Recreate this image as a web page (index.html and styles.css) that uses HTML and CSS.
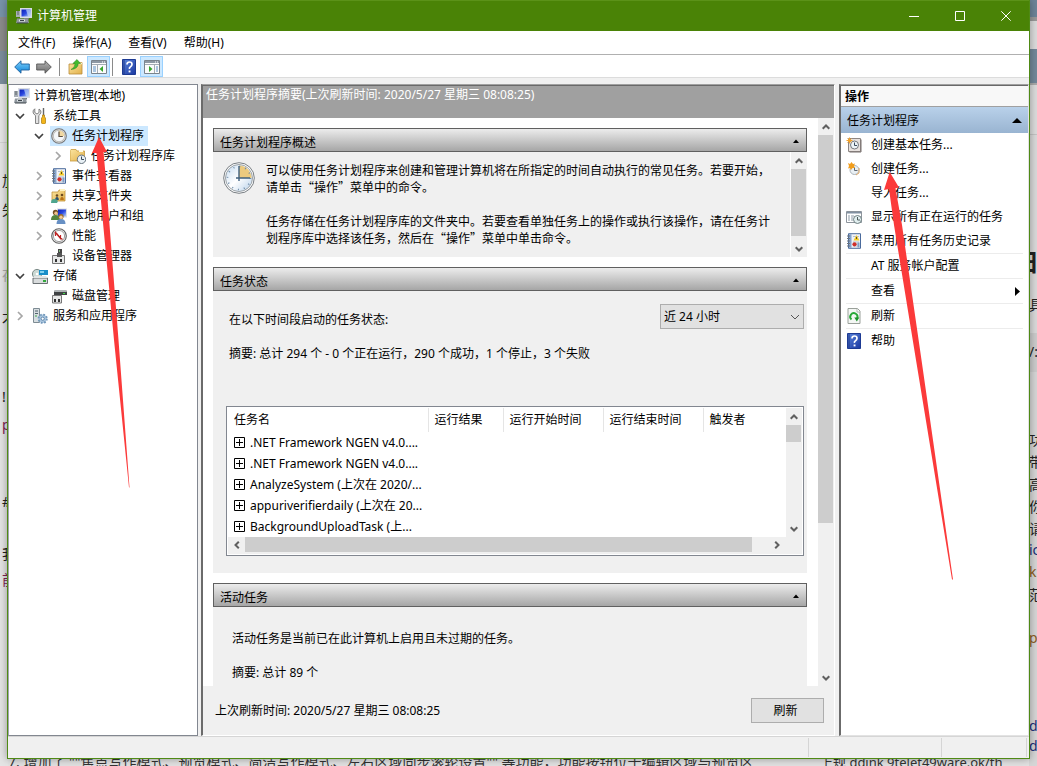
FILE: index.html
```html
<!DOCTYPE html>
<html lang="zh-CN">
<head>
<meta charset="utf-8">
<title>计算机管理</title>
<link rel="stylesheet" href="styles.css">
</head>
<body>
<svg class="defs" aria-hidden="true">
  <defs>
    <linearGradient id="gBlue" x1="0" y1="0" x2="1" y2="1"><stop offset="0" stop-color="#0a1fb4"/><stop offset=".5" stop-color="#2a48e0"/><stop offset="1" stop-color="#b8d4f8"/></linearGradient>
    <linearGradient id="gHelp" x1="0" y1="0" x2="1" y2="1"><stop offset="0" stop-color="#5b86dc"/><stop offset="1" stop-color="#1a37a0"/></linearGradient>
    <linearGradient id="gArrow" x1="0" y1="0" x2="0" y2="1"><stop offset="0" stop-color="#7fd0fb"/><stop offset="1" stop-color="#0d83d8"/></linearGradient>
    <linearGradient id="gGrey" x1="0" y1="0" x2="0" y2="1"><stop offset="0" stop-color="#b4b4b4"/><stop offset="1" stop-color="#6c6c6c"/></linearGradient>
    <linearGradient id="gFace" x1="0" y1="0" x2="1" y2="1"><stop offset="0" stop-color="#c3daf0"/><stop offset=".5" stop-color="#fff"/><stop offset="1" stop-color="#b5d0ea"/></linearGradient>
    <linearGradient id="gFold" x1="0" y1="0" x2="1" y2="1"><stop offset="0" stop-color="#fbe5a0"/><stop offset="1" stop-color="#e2b04a"/></linearGradient>
    <symbol id="i-computer" viewBox="0 0 16 16">
      <path d="M4 0h12v10H4z" fill="#d9dde2"/><path d="M5.500 1.500h9v7h-9z" fill="url(#gBlue)"/><path d="M10 1.500h4.500v7H12z" fill="#b9d2f6" opacity=".75"/>
      <path d="M0 3h4v6H0z" fill="#a9b0b6"/><path d="M1 4h2M1 6h2" stroke="#596066"/>
      <path d="M8 10h5v1.500H8z" fill="#70777d"/><path d="M1 10.500h11l1 4.500H0z" fill="#8f979e"/><path d="M3 11.500h6v2H3z" fill="#dfe5e8"/><path d="M4 12.500h4M1 15h11" stroke="#3e464c"/>
    </symbol>
    <symbol id="i-tools" viewBox="0 0 16 16">
      <path d="M2.800.8v3.700L5 6l2-1.500V1q2 1 2 3T6.800 7.500v8H3.500v-8Q1 6 1 4T2.800.8z" fill="#e3e3e3" stroke="#777" stroke-width=".9"/>
      <path d="M11.500 0v7" stroke="#666" stroke-width="1.400"/><path d="M10.500 7h2v2l1 1v5l-1 1h-2l-1-1v-5l1-1z" fill="#f3b51b" stroke="#a7780c" stroke-width=".7"/>
    </symbol>
    <symbol id="i-clock" viewBox="0 0 16 16">
      <circle cx="8" cy="8" r="7.300" fill="#e2e2e0" stroke="#77787a" stroke-width="1.100"/><circle cx="8" cy="8" r="5.700" fill="#f4f7fa" stroke="#a8a8a4" stroke-width=".7"/>
      <path d="M8 8V2.500A5.500 5.500 0 0 1 13.500 8z" fill="#f0d8a2"/><path d="M8 3.500V8.500h3.800" fill="none" stroke="#5a4d3e" stroke-width="1.200"/>
    </symbol>
    <symbol id="i-bigclock" viewBox="0 0 32 32">
      <circle cx="16" cy="16" r="15.300" fill="#fff" stroke="#777d82"/><circle cx="16" cy="16" r="13.500" fill="url(#gFace)" stroke="#9aa1a6"/>
      <path d="M16 16V3.500A12.500 12.500 0 0 1 28.500 16z" fill="#ecca7e"/>
      <circle cx="16" cy="16" r="11.500" fill="none" stroke="#6d8aa6" stroke-width="1.600" stroke-dasharray="1 5.020"/>
      <path d="M16 4v15M13 16h14" stroke="#3f607e" stroke-width="1.400"/>
    </symbol>
    <symbol id="i-folderclock" viewBox="0 0 16 16">
      <path d="M0 2.500l1-1h5l1 1.500h7.500V13H0z" fill="url(#gFold)" stroke="#c79a3c" stroke-width=".8"/><path d="M9 2h4v2H9z" fill="#fffbe8"/>
      <circle cx="11.500" cy="11.300" r="4.200" fill="#e9f0f5" stroke="#66737d"/><path d="M11.500 8.500v3H14" fill="none" stroke="#384c5c"/>
    </symbol>
    <symbol id="i-book" viewBox="0 0 16 16">
      <path d="M2.500.7h12v14.600h-12z" fill="#f0f2f6" stroke="#4a6a9c"/><path d="M3 1.200h2.500v13.600H3z" fill="#86a4cc"/>
      <path d="M1 3h3M1 5.500h3M1 8h3M1 10.500h3M1 13h3" stroke="#6d757d"/><path d="M7 9h6M7 11h6M7 13h6M7 3.500h6" stroke="#b3bfce"/>
      <path d="M10.500 2L13.500 7.500H7.500z" fill="#f6cb27"/><path d="M10.500 4v2" stroke="#665214"/><circle cx="8.500" cy="11.300" r="2.100" fill="#cf2d2a"/><path d="M11.500 9.500h2v5h-2z" fill="#7f9cc6"/>
    </symbol>
    <symbol id="i-share" viewBox="0 0 16 16">
      <path d="M1 4h6l1-2h6v11H1z" fill="url(#gFold)" stroke="#c29338" stroke-width=".8"/><path d="M9 1h5v2H9z" fill="#fff2c0"/>
      <circle cx="6" cy="7.500" r="1.300" fill="#6b4a20"/><path d="M4.200 12q0-3 1.800-3t1.800 3z" fill="#31516c"/><circle cx="11" cy="7" r="1.300" fill="#6b4a20"/><path d="M9.200 12q0-3 1.800-3t1.800 3z" fill="#b77218"/>
      <path d="M0 15q0-4 3-4t4 2l-1 2z" fill="#4ea58e"/>
    </symbol>
    <symbol id="i-users" viewBox="0 0 16 16">
      <path d="M6 .5h10v9H6z" fill="#d9dde2"/><path d="M7 1.500h8v7H7z" fill="url(#gBlue)"/>
      <circle cx="4.500" cy="4.500" r="2.700" fill="#765126"/><circle cx="5" cy="5.300" r="1.700" fill="#eec28e"/><path d="M0 12q0-5 4.500-5T9 12z" fill="#54843e"/>
      <circle cx="10" cy="8.500" r="2.600" fill="#9a6c28"/><circle cx="10" cy="9.300" r="1.700" fill="#f0c89a"/><path d="M5.500 16q0-5 4.500-5t4.500 5z" fill="#6790c4"/>
    </symbol>
    <symbol id="i-perf" viewBox="0 0 16 16">
      <circle cx="8" cy="8" r="7.300" fill="#f2f2f2" stroke="#606060" stroke-width="1.100"/><circle cx="8" cy="8" r="5.600" fill="#fff" stroke="#888" stroke-width=".8"/>
      <path d="M4.500 8V4.500l5 6V7M9 10.500l2.500.5" fill="none" stroke="#c32424" stroke-width="1.200"/><path d="M5 4.500l6 7" stroke="#b01818"/>
    </symbol>
    <symbol id="i-device" viewBox="0 0 16 16">
      <path d="M7 1h4v8H7z" fill="#454545"/><path d="M8.500 2v2" stroke="#7fb37a"/><path d="M1.500 7.500h12v8h-12z" fill="#e7e8e8" stroke="#777"/><path d="M6 5h5v4H6z" fill="#555"/><path d="M4 11h2v3H4zM9 11h2v3H9z" fill="#333"/>
    </symbol>
    <symbol id="i-storage" viewBox="0 0 16 16">
      <circle cx="5" cy="6" r="4.600" fill="#cbd9d4" stroke="#7c8b88"/><circle cx="5" cy="6" r="1.300" fill="#fff"/>
      <path d="M7 2h9v5H7z" fill="#1a8ec8"/><path d="M8 3h4v2H8z" fill="#84d1ef"/><path d="M1 10h14.500v5.500H1z" fill="#d9dcdd" stroke="#5c6265" stroke-width=".9"/><path d="M2 8h12l1.500 2H1z" fill="#e2e5e5"/><path d="M11 12h3v2h-3z" fill="#32a83b"/>
    </symbol>
    <symbol id="i-disk" viewBox="0 0 16 16">
      <path d="M4 2h11l1 2v3H3V4z" fill="#3f4244"/><path d="M4 2h11l1 2H3z" fill="#aeb3b5"/><path d="M12 5.500h2" stroke="#46df4b"/><path d="M1.500 7.500h9v7.500h-9z" fill="#e7e8e8" stroke="#777"/><path d="M3 11h2v3H3zM7 11h2v3H7z" fill="#333"/>
    </symbol>
    <symbol id="i-service" viewBox="0 0 16 16">
      <path d="M1.500.5h6v14h-6z" fill="#d6dde0" stroke="#7d8b93"/><path d="M3 3h3M3 5.500h3" stroke="#53646e"/><path d="M3 8h2" stroke="#3ba646"/>
      <circle cx="10.700" cy="10.700" r="4.200" fill="#a9c5de" stroke="#7197ba" stroke-width="1.800" stroke-dasharray="1.800 1.500"/><circle cx="10.700" cy="10.700" r="1.600" fill="#fff" stroke="#5f86ab"/>
    </symbol>
    <symbol id="i-help" viewBox="0 0 14 16">
      <path d="M.5.5h13v15H.5z" fill="url(#gHelp)" stroke="#1d3a93"/><path d="M2 1v14" stroke="#1c3484"/>
      <path d="M5 5.500Q5 3 7.500 3T10 5.300Q10 6.800 8.500 7.700T7.500 10" fill="none" stroke="#fff" stroke-width="1.700"/><path d="M6.600 11.500h1.900v1.900H6.600z" fill="#fff"/>
    </symbol>
    <symbol id="i-back" viewBox="0 0 16 14">
      <path d="M.7 7L7 .8V4h8.300v6H7v3.200z" fill="url(#gArrow)" stroke="#1b5f9c" stroke-width=".9"/>
    </symbol>
    <symbol id="i-fwd" viewBox="0 0 16 14">
      <path d="M15.300 7L9 .8V4H.7v6H9v3.200z" fill="url(#gGrey)" stroke="#555" stroke-width=".9"/>
    </symbol>
    <symbol id="i-up" viewBox="0 0 16 16">
      <path d="M1 5h5l1-1.500h7V15H1z" fill="url(#gFold)" stroke="#b98c38" stroke-width=".8"/><path d="M9 4.500h5" stroke="#fff3c6" stroke-width="1.500"/>
      <path d="M3 10.500Q7 9 7 4.500H4.800L9 .5l3.500 4h-2.200Q10 10 3 10.500z" fill="#43bb2c" stroke="#23831a" stroke-width=".5"/>
    </symbol>
    <symbol id="i-paneleft" viewBox="0 0 16 14">
      <path d="M.5.5h15v13H.5z" fill="#fbfbfb" stroke="#7a838c"/><path d="M1 1h14v2H1z" fill="#8d98a4"/><path d="M11 2h1M13 2h1" stroke="#fff"/><path d="M1 4.500h14M6.500 5v8" stroke="#a4acb5"/><path d="M2 7h3M2 9h3M2 11h3" stroke="#5a8fc4"/><path d="M12 6v6L8.500 9z" fill="#36a52b"/>
    </symbol>
    <symbol id="i-paneright" viewBox="0 0 16 14">
      <path d="M.5.5h15v13H.5z" fill="#fbfbfb" stroke="#7a838c"/><path d="M1 1h14v2H1z" fill="#8d98a4"/><path d="M11 2h1M13 2h1" stroke="#fff"/><path d="M1 4.500h14M10.500 5v8" stroke="#a4acb5"/><path d="M12 7h2M12 9h2M12 11h2" stroke="#5a8fc4"/><path d="M5 6v6l3.500-3z" fill="#36a52b"/>
    </symbol>
    <symbol id="i-basic" viewBox="0 0 16 16">
      <path d="M2.500 1.500h12v13h-12z" fill="#e8e2df" stroke="#8d8683"/><path d="M15 2.500v12.500H3.500" fill="none" stroke="#78716e"/><circle cx="8.500" cy="8" r="4" fill="#edf4f8" stroke="#76797e"/><path d="M8.500 5.500V8.500H11" fill="none" stroke="#3e4d5d"/>
      <path d="M3.500.5v6M.5 3.500h6M1.500 1.500l4 4M5.500 1.500l-4 4" stroke="#f2a22a"/>
    </symbol>
    <symbol id="i-task" viewBox="0 0 16 16">
      <circle cx="8.500" cy="9" r="4.500" fill="#e9eff3" stroke="#a9b2b9"/><path d="M8.500 6.500v3H11.500" fill="none" stroke="#5f6871"/><path d="M13 7v5l-3 2" fill="none" stroke="#e0a968"/>
      <path d="M3 3h5v4H3z" fill="#f6b03a"/><path d="M2 2l2 1 1.500-2L7 3l2-.5L8 5l1 2-2.500 0L5 9 4 7 2 7.500 3 5z" fill="#f19d1c"/>
    </symbol>
    <symbol id="i-running" viewBox="0 0 16 16">
      <path d="M.5 2.500h15v11H.5z" fill="#fff" stroke="#8d949c"/><path d="M1 3h14v1.500H1z" fill="#8190a1"/><path d="M2 7h2M5 7h3M2 9h2M5 9h2M2 11h2M5 11h2" stroke="#8c99a5"/>
      <circle cx="11.500" cy="10.500" r="4" fill="#e2eff0" stroke="#6e7e80"/><path d="M11.500 8v3H14" fill="none" stroke="#4f5d5c"/>
    </symbol>
    <symbol id="i-refresh" viewBox="0 0 16 16">
      <path d="M2 .5h9.500L14 3v12.500H2z" fill="#f4f7f4" stroke="#9aa09a"/><path d="M11 1v3h3" fill="#fff" stroke="#9aa09a" stroke-width=".7"/>
      <path d="M5.500 11.500A3.600 3.600 0 1 1 11 10.500" fill="none" stroke="#28a838" stroke-width="1.900"/><path d="M8.300 9.500h5l-2.500 4z" fill="#1b9229"/>
    </symbol>
    <symbol id="c-up" viewBox="0 0 8 6"><path d="M.7 4.800L4 1.500l3.300 3.300" fill="none" stroke="currentColor" stroke-width="2"/></symbol>
    <symbol id="c-down" viewBox="0 0 8 6"><path d="M.7 1.200L4 4.500l3.300-3.300" fill="none" stroke="currentColor" stroke-width="2"/></symbol>
    <symbol id="c-left" viewBox="0 0 6 8"><path d="M4.800.7L1.500 4l3.300 3.300" fill="none" stroke="currentColor" stroke-width="2"/></symbol>
    <symbol id="c-right" viewBox="0 0 6 8"><path d="M1.200.7L4.500 4 1.200 7.300" fill="none" stroke="currentColor" stroke-width="2"/></symbol>
    <symbol id="t-open" viewBox="0 0 10 10"><path d="M1 3l4 4 4-4" fill="none" stroke="#404040" stroke-width="1.700"/></symbol>
    <symbol id="t-closed" viewBox="0 0 10 10"><path d="M3 1l4 4-4 4" fill="none" stroke="#a6a6a6" stroke-width="1.700"/></symbol>
    <symbol id="t-tri" viewBox="0 0 6 4"><path d="M0 4l3-3.500L6 4z"/></symbol>
  </defs>
</svg>

<div class="desktop" aria-hidden="true">
  <div class="edge edge-left">
    <i style="top:172px">加</i><i style="top:201px">失</i><i style="top:266px" class="faint">存</i><i style="top:309px">才</i><i style="top:388px">!</i><i style="top:416px" class="plum">p</i><i style="top:493px">#</i><i style="top:545px">我</i><i style="top:571px" class="plum">前</i>
  </div>
  <div class="edge edge-right">
    <i style="top:250px" class="large">日</i><i style="top:296px">具</i><i style="top:343px">/:</i><i style="top:431px">功</i><i style="top:453px">带</i><i style="top:476px">高</i><i style="top:498px">你</i><i style="top:520px">请</i><i style="top:541px" class="navy">ic</i><i style="top:563px" class="brown">k</i><i style="top:586px">范</i><i style="top:629px" class="brown">p</i><i style="top:717px" class="navy">d&gt;</i><i style="top:737px" class="navy">d&gt;</i>
  </div>
  <p class="under under-left">7. 增加了 ""焦点写作模式、预览模式、简洁写作模式、左右区域同步滚轮设置"" 等功能，功能按钮位于编辑区域与预览区</p>
  <p class="under under-right">上规 ddink 9telet49ware.ok/th</p>
</div>

<main class="window">
  <header class="titlebar">
    <svg class="ic"><use href="#i-computer"/></svg>
    <h1>计算机管理</h1>
    <button class="winbtn" aria-label="最小化"><svg viewBox="0 0 10 10"><path d="M0 5.500h10"/></svg></button>
    <button class="winbtn" aria-label="最大化"><svg viewBox="0 0 10 10"><path d="M.5.5h9v9h-9z"/></svg></button>
    <button class="winbtn" aria-label="关闭"><svg viewBox="0 0 10 10"><path d="M.3.3l9.400 9.400M9.700.3L.3 9.700"/></svg></button>
  </header>
  <nav class="menubar">
    <button>文件(F)</button><button>操作(A)</button><button>查看(V)</button><button>帮助(H)</button>
  </nav>
  <div class="toolbar">
    <button aria-label="后退" class="back"><svg class="ic"><use href="#i-back"/></svg></button>
    <button aria-label="前进" class="fwd"><svg class="ic"><use href="#i-fwd"/></svg></button>
    <span class="sep"></span>
    <button aria-label="上一级"><svg class="ic"><use href="#i-up"/></svg></button>
    <button aria-label="显示控制台树" class="on"><svg class="ic"><use href="#i-paneleft"/></svg></button>
    <span class="sep"></span>
    <button aria-label="帮助"><svg class="ic"><use href="#i-help"/></svg></button>
    <button aria-label="显示操作窗格" class="on"><svg class="ic"><use href="#i-paneright"/></svg></button>
  </div>

  <div class="panes">
    <nav class="tree">
      <ul>
        <li><button class="node root"><svg class="ic"><use href="#i-computer"/></svg><span>计算机管理(本地)</span></button>
          <ul>
            <li><button class="node"><svg class="tw"><use href="#t-open"/></svg><span class="pick"><svg class="ic"><use href="#i-tools"/></svg><span>系统工具</span></span></button>
              <ul>
                <li><button class="node"><svg class="tw"><use href="#t-open"/></svg><span class="pick selected"><svg class="ic"><use href="#i-clock"/></svg><span>任务计划程序</span></span></button>
                  <ul><li><button class="node"><svg class="tw"><use href="#t-closed"/></svg><span class="pick"><svg class="ic"><use href="#i-folderclock"/></svg><span>任务计划程序库</span></span></button></li></ul>
                </li>
                <li><button class="node"><svg class="tw"><use href="#t-closed"/></svg><span class="pick"><svg class="ic"><use href="#i-book"/></svg><span>事件查看器</span></span></button></li>
                <li><button class="node"><svg class="tw"><use href="#t-closed"/></svg><span class="pick"><svg class="ic"><use href="#i-share"/></svg><span>共享文件夹</span></span></button></li>
                <li><button class="node"><svg class="tw"><use href="#t-closed"/></svg><span class="pick"><svg class="ic"><use href="#i-users"/></svg><span>本地用户和组</span></span></button></li>
                <li><button class="node"><svg class="tw"><use href="#t-closed"/></svg><span class="pick"><svg class="ic"><use href="#i-perf"/></svg><span>性能</span></span></button></li>
                <li><button class="node"><svg class="tw"></svg><span class="pick"><svg class="ic"><use href="#i-device"/></svg><span>设备管理器</span></span></button></li>
              </ul>
            </li>
            <li><button class="node"><svg class="tw"><use href="#t-open"/></svg><span class="pick"><svg class="ic"><use href="#i-storage"/></svg><span>存储</span></span></button>
              <ul><li><button class="node"><svg class="tw"></svg><span class="pick"><svg class="ic"><use href="#i-disk"/></svg><span>磁盘管理</span></span></button></li></ul>
            </li>
            <li><button class="node"><svg class="tw"><use href="#t-closed"/></svg><span class="pick"><svg class="ic"><use href="#i-service"/></svg><span>服务和应用程序</span></span></button></li>
          </ul>
        </li>
      </ul>
    </nav>

    <section class="summary">
      <h2>任务计划程序摘要(上次刷新时间: 2020/5/27 星期三 08:08:25)</h2>
      <div class="scroller">
        <div class="cards">
          <article class="card">
            <button class="cardhead"><span>任务计划程序概述</span><svg class="tri"><use href="#t-tri"/></svg></button>
            <div class="overview">
              <svg class="bigic"><use href="#i-bigclock"/></svg>
              <div class="copy">
                <p>可以使用任务计划程序来创建和管理计算机将在所指定的时间自动执行的常见任务。若要开始，<br>请单击“操作”菜单中的命令。</p>
                <p>任务存储在任务计划程序库的文件夹中。若要查看单独任务上的操作或执行该操作，请在任务计<br>划程序库中选择该任务，然后在“操作”菜单中单击命令。</p>
              </div>
              <div class="vbar framed"><svg class="cap"><use href="#c-up"/></svg><span class="thumb" style="flex-grow:67"></span><span style="flex-grow:4"></span><svg class="cap"><use href="#c-down"/></svg></div>
            </div>
          </article>

          <article class="card">
            <button class="cardhead"><span>任务状态</span><svg class="tri"><use href="#t-tri"/></svg></button>
            <div class="status">
              <div class="period">
                <label for="period">在以下时间段启动的任务状态:</label>
                <div class="combo"><select id="period"><option>近 24 小时</option></select><svg viewBox="0 0 8 6"><path d="M0 1l4 4 4-4"/></svg></div>
              </div>
              <p>摘要: 总计 294 个 - 0 个正在运行，290 个成功，1 个停止，3 个失败</p>
              <div class="grid">
                <div class="gridmain">
                  <table>
                    <colgroup><col class="c1"><col class="c2"><col class="c3"><col class="c3"><col></colgroup>
                    <thead><tr><th>任务名</th><th>运行结果</th><th>运行开始时间</th><th>运行结束时间</th><th>触发者</th></tr></thead>
                    <tbody>
                      <tr><td colspan="5"><svg class="plus" viewBox="0 0 11 11"><path d="M.5.5h10v10H.5zM2 5.500h7M5.500 2v7"/></svg>.NET Framework NGEN v4.0....</td></tr>
                      <tr><td colspan="5"><svg class="plus" viewBox="0 0 11 11"><path d="M.5.5h10v10H.5zM2 5.500h7M5.500 2v7"/></svg>.NET Framework NGEN v4.0....</td></tr>
                      <tr><td colspan="5"><svg class="plus" viewBox="0 0 11 11"><path d="M.5.5h10v10H.5zM2 5.500h7M5.500 2v7"/></svg>AnalyzeSystem (上次在 2020/...</td></tr>
                      <tr><td colspan="5"><svg class="plus" viewBox="0 0 11 11"><path d="M.5.5h10v10H.5zM2 5.500h7M5.500 2v7"/></svg>appuriverifierdaily (上次在 20...</td></tr>
                      <tr><td colspan="5"><svg class="plus" viewBox="0 0 11 11"><path d="M.5.5h10v10H.5zM2 5.500h7M5.500 2v7"/></svg>BackgroundUploadTask (上...</td></tr>
                    </tbody>
                  </table>
                  <div class="vbar"><svg class="cap"><use href="#c-up"/></svg><span class="thumb" style="flex-grow:17"></span><span style="flex-grow:79"></span><svg class="cap"><use href="#c-down"/></svg></div>
                </div>
                <div class="hbar"><svg class="cap"><use href="#c-left"/></svg><span class="thumb" style="flex-grow:507"></span><span style="flex-grow:16"></span><svg class="cap"><use href="#c-right"/></svg></div>
              </div>
            </div>
          </article>

          <article class="card last">
            <button class="cardhead"><span>活动任务</span><svg class="tri"><use href="#t-tri"/></svg></button>
            <div class="active">
              <p>活动任务是当前已在此计算机上启用且未过期的任务。</p>
              <p>摘要: 总计 89 个</p>
            </div>
          </article>
        </div>
        <div class="vbar"><svg class="cap"><use href="#c-up"/></svg><span class="thumb" style="flex-grow:388"></span><span style="flex-grow:146"></span><svg class="cap"><use href="#c-down"/></svg></div>
      </div>
      <footer class="refreshed"><span>上次刷新时间: 2020/5/27 星期三 08:08:25</span><button>刷新</button></footer>
    </section>

    <aside class="actions">
      <h2>操作</h2>
      <button class="group"><span>任务计划程序</span><svg viewBox="0 0 10 5"><path d="M0 5l5-5 5 5z"/></svg></button>
      <div class="items">
        <button><svg class="ic"><use href="#i-basic"/></svg><span>创建基本任务...</span></button>
        <button><svg class="ic"><use href="#i-task"/></svg><span>创建任务...</span></button>
        <button><svg class="ic"></svg><span>导入任务...</span></button>
        <button><svg class="ic"><use href="#i-running"/></svg><span>显示所有正在运行的任务</span></button>
        <button><svg class="ic"><use href="#i-book"/></svg><span>禁用所有任务历史记录</span></button>
        <button class="ruled"><svg class="ic"></svg><span>AT 服务帐户配置</span></button>
        <button class="ruled"><svg class="ic"></svg><span>查看</span><svg class="more" viewBox="0 0 5 9"><path d="M0 0l5 4.500L0 9z"/></svg></button>
        <button class="ruled"><svg class="ic"><use href="#i-refresh"/></svg><span>刷新</span></button>
        <button class="ruled"><svg class="ic"><use href="#i-help"/></svg><span>帮助</span></button>
      </div>
    </aside>
  </div>

  <footer class="statusbar"><span class="s1"></span><span class="s2"></span><span class="s3"></span></footer>
</main>

<svg class="marks" width="1037" height="766" viewBox="0 0 1037 766" aria-hidden="true">
  <path d="M99 137l8 15h-3.500l2.500 28 12.500 160 11 147.500h-.5L114 340 99 180l-2.500-27H92z"/>
  <path d="M889.700 172l9.300 15.500-3.500.8 6.500 36.700 19.500 135 31.500 219.500h-1L916 360l-22-135-5-36-5 1z"/>
</svg>
</body>
</html>
```
FILE: styles.css
```css
* { box-sizing: border-box; }
html, body { height: 100%; }
body {
  margin: 0;
  padding: 0 7px 7px;
  overflow: hidden;
  background: #e2e2e2;
  color: #000;
  font: 12px/16px "Noto Sans", "Noto Sans CJK SC", sans-serif;
}
h1, h2, p, ul { margin: 0; padding: 0; font-size: 12px; font-weight: 400; }
ul { list-style: none; }
button {
  margin: 0;
  padding: 0;
  border: 0;
  background: none;
  color: inherit;
  font: inherit;
  text-align: left;
}
.defs { position: absolute; width: 0; height: 0; }
.ic { width: 16px; height: 16px; flex: none; }

/* desktop behind the window */
.desktop { position: absolute; inset: 0; overflow: hidden; z-index: -1; }
.edge { position: absolute; top: 0; bottom: 0; width: 8px; overflow: hidden; }
.edge i { position: absolute; left: 0; font-style: normal; font-size: 14px; line-height: 18px; color: #222; white-space: nowrap; }
.edge-left { left: 0; background: linear-gradient(#7893a8 0 17px, #8b8b8b 17px 51px, #7b8d9c 51px 84px, #e6e6e6 84px 142px, #d2d2d2 142px 143px, #e4e4e4 143px); }
.edge-left i { left: 2px; }
.edge-right { right: 0; background: linear-gradient(#6d8498 0 17px, #999 17px 21px, #dcdcdc 21px 49px, #73889a 49px 83px, #aaa 83px 85px, #dcdcdc 85px 134px, #c4c4c4 134px 135px, #dadada 135px 333px, #ccc 333px 372px, #d6d6d6 372px); }
.edge .large { font-size: 24px; line-height: 24px; font-weight: 700; left: -14px; }
.edge .faint { color: #aaa; }
.edge .plum { color: #7c2150; }
.edge .navy { color: #1b2e78; }
.edge .brown { color: #8c5a22; }
.under { position: absolute; bottom: -5px; font-size: 14px; line-height: 18px; white-space: nowrap; color: #333; }
.under-left { left: 8px; }
.under-right { left: 820px; width: 209px; overflow: hidden; font-size: 13px; }

/* window frame */
.window {
  display: flex;
  flex-direction: column;
  height: 100%;
  border: 1px solid #4f8a15;
  border-top: 0;
  background: #f0f0f0;
  box-shadow: 0 0 8px rgba(0, 0, 0, .35);
}
.titlebar { display: flex; align-items: center; height: 31px; padding-left: 8px; background: #4a8306; color: #fff; border-top: 1px solid #5b9218; flex: none; }
.titlebar h1 { flex: 1; padding-left: 5px; }
.winbtn { display: grid; place-items: center; width: 46px; height: 30px; }
.winbtn svg { width: 10px; height: 10px; fill: none; stroke: #fff; }
.menubar { display: flex; flex: none; height: 24px; padding: 1px 0 0 10px; gap: 17px; align-items: center; background: #fff; border-bottom: 1px solid #b0b0b0; }
.toolbar { display: flex; flex: none; align-items: center; height: 23px; padding: 1px 0 0 5px; background: #fff; border-bottom: 1px solid #dcdcdc; }
.toolbar button { display: grid; place-items: center; width: 23px; height: 21px; }
.toolbar .on { background: #cce8ff; border: 1px solid #99d1ff; }
.toolbar .back { width: 17px; }
.toolbar .fwd { width: 27px; }
.toolbar .sep { width: 1px; height: 18px; margin: 0 4px 0 2px; background: #8a8a8a; }

/* three panes */
.panes { display: flex; flex: 1; min-height: 0; padding-top: 6px; }
.tree { flex: none; width: 190px; padding: 1px 0 0 5px; background: #fff; border: 1px solid #828790; border-left-color: #a0a5ac; }
.node { display: flex; align-items: center; height: 20px; white-space: nowrap; }
.root { gap: 4px; }
.tree ul ul ul { padding-left: 19px; }
.tw { width: 10px; height: 10px; margin: 0 6px 0 1px; flex: none; }
.pick { display: flex; align-items: center; gap: 5px; height: 20px; padding: 0 4px 0 1px; }
.selected { background: #cce8ff; }

.summary { display: flex; flex-direction: column; flex: 1; min-width: 0; margin: 0 4px 0 3px; border: 1px solid #a0a0a0; border-left: 2px solid #6b6b6b; border-right-color: #fff; border-bottom-color: #fff; }
.summary h2 { height: 33px; flex: none; padding: 1px 3px; background: #a0a0a0; border-top: 1px solid #696969; color: #fff; white-space: nowrap; }
.scroller { display: flex; flex: 1; min-height: 0; background: #fff; overflow: hidden; }
.cards { display: flex; flex-direction: column; flex: 1; min-width: 0; gap: 10px; padding: 10px 11px 0 10px; }
.card { flex: none; background: #f0f0f0; }
.last { flex: 1; }
.cardhead { display: flex; align-items: center; justify-content: space-between; width: 100%; height: 24px; padding: 5px 7px 0 6px; border: 1px solid #606060; background: linear-gradient(#ececec, #a6a6a6); }
.tri { width: 6px; height: 4px; margin-bottom: 4px; }
.overview { display: flex; height: 105px; padding-left: 10px; }
.bigic { width: 32px; height: 32px; margin: 10px 11px 0 0; flex: none; }
.copy { flex: 1; min-width: 0; padding-top: 9px; line-height: 17px; font-family: "Noto Sans CJK SC", sans-serif; white-space: nowrap; }
.copy p + p { margin-top: 17px; }

.vbar { display: flex; flex: none; flex-direction: column; width: 16px; padding-right: 1px; background: #f0f0f0; color: #606060; }
.vbar.framed { width: 17px; border-left: 1px solid #fff; }
.thumb { background: #cdcdcd; }
.vbar .cap { width: 8px; height: 17px; margin: 0 auto; padding: 6px 0 5px; flex: none; }
.hbar { display: flex; flex: none; height: 17px; padding: 0 17px 2px 0; background: #f0f0f0; color: #606060; }
.hbar .cap { width: 17px; height: 8px; margin: auto 0; padding: 0 5px 0 6px; flex: none; }

.status { padding: 13px 3px 17px 13px; height: 282px; display: flex; flex-direction: column; }
.period { display: flex; justify-content: space-between; margin-left: 3px; }
.period label { padding-top: 8px; }
.status > p { margin: 17px 0 44px 3px; }
.combo { position: relative; width: 144px; }
.combo select { appearance: none; width: 100%; height: 25px; padding: 0 3px; border: 1px solid #adadad; border-radius: 0; background: #e1e1e1; font: inherit; color: inherit; }
.combo svg { position: absolute; right: 5px; top: 10px; width: 8px; height: 6px; fill: none; stroke: #555; pointer-events: none; }
.grid { display: flex; flex-direction: column; flex: 1; min-height: 0; padding: 1px; border: 1px solid #828790; background: #fff; }
.gridmain { display: flex; flex: 1; min-height: 0; }
table { flex: 1; height: 129px; border-collapse: collapse; table-layout: fixed; width: 100%; }
.c1 { width: 200px; }
.c2 { width: 75px; }
.c3 { width: 100px; }
th { height: 24px; padding: 0 6px; font-weight: 400; text-align: left; border-right: 1px solid #e5e5e5; white-space: nowrap; }
th:last-child { border-right: 0; }
td { height: 21px; padding: 0 6px; white-space: nowrap; }
.plus { width: 11px; height: 11px; margin-right: 5px; fill: none; stroke: #000; vertical-align: -1px; }
.active { padding: 24px 19px 0; }
.active p + p { margin-top: 18px; }
.refreshed { display: flex; align-items: center; justify-content: space-between; flex: none; height: 49px; padding: 0 10px 0 12px; }
.refreshed button { width: 73px; height: 25px; border: 1px solid #adadad; background: #e1e1e1; text-align: center; padding-right: 4px; }

.actions { flex: none; width: 190px; background: #fff; border: 1px solid #a0a0a0; border-left: 2px solid #6b6b6b; border-right-color: #e3e3e3; border-bottom-color: #e3e3e3; }
.actions h2 { height: 22px; padding: 3px 5px 0 4px; font-weight: 700; background: #f8f8f8; border-top: 1px solid #696969; border-bottom: 1px solid #a0a0a0; }
.group { display: flex; align-items: center; justify-content: space-between; width: 100%; height: 26px; padding: 1px 6px 0; background: linear-gradient(#b9d1ea, #99b4d1); }
.group svg { width: 10px; height: 5px; }
.items { padding: 0 5px; }
.items button { display: flex; align-items: center; gap: 9px; width: 100%; height: 24px; white-space: nowrap; }
.items .ruled { height: 25px; border-top: 1px solid #ececec; }
.items .more { width: 5px; height: 9px; margin-left: auto; margin-right: 3px; }

.statusbar { display: flex; flex: none; height: 22px; border-top: 1px solid #d5d5d5; padding: 1px 2px 1px 0; }
.statusbar span { border-right: 1px solid #d5d5d5; }
.s1 { flex: 1; }
.s2 { width: 133px; }
.s3 { width: 85px; }

/* red pointers drawn over the window */
.marks { position: absolute; left: 0; top: 0; fill: #fb3a3a; pointer-events: none; }
```
